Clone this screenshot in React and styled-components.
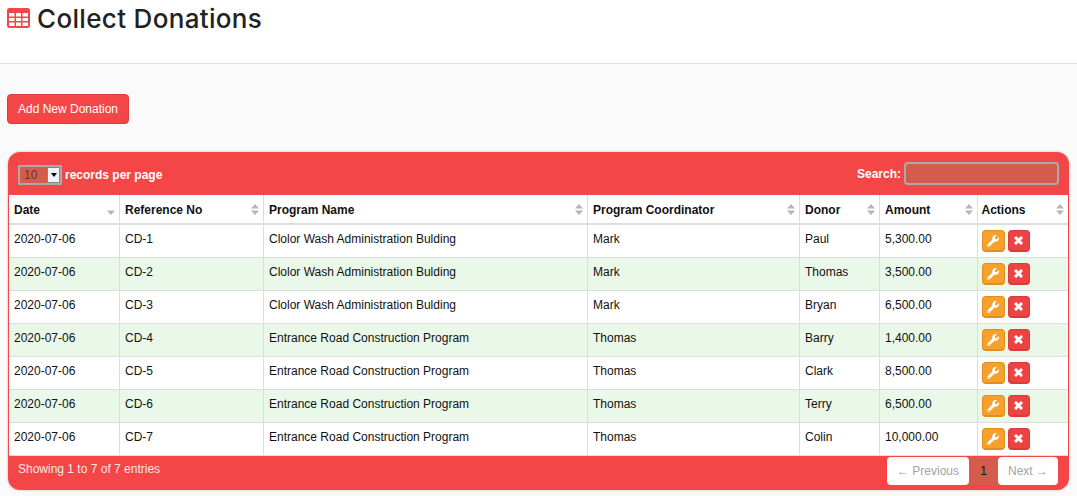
import React from "react";
import styled, { createGlobalStyle } from "styled-components";
import { FaWrench } from "react-icons/fa";

const Global = createGlobalStyle`
  html, body { margin: 0; padding: 0; background: #fafafa; }
  body { font-family: "Liberation Sans", Arial, sans-serif; font-size: 12px; color: #111; }
  * { box-sizing: border-box; }
`;

const Page = styled.div`
  width: 1077px;
  height: 496px;
  overflow: hidden;
`;
const Header = styled.header`
  height: 64px;
  background: #fff;
  border-bottom: 1px solid #dedede;
  padding: 2px 7px 0;
  display: flex;
  align-items: flex-start;
  gap: 7px;
`;
const TitleIcon = styled.svg`
  width: 23px;
  height: 20px;
  margin-top: 6px;
  fill: #f44646;
`;
const Title = styled.h1`
  margin: 0;
  font-family: "Inter", "Noto Sans", sans-serif;
  font-size: 26px;
  line-height: 34px;
  font-weight: 500;
  letter-spacing: 0.33px;
  color: #222;
`;
const Content = styled.main`
  padding: 30px 8px 0 7px;
`;
const AddButton = styled.button`
  display: block;
  width: 122px;
  height: 30px;
  background: #f44646;
  color: #fff;
  border: 1px solid #d83c3c;
  border-radius: 4px;
  font: 12px "Liberation Sans", Arial, sans-serif;
  padding: 0;
`;
const Card = styled.section`
  margin: 28px 0 0 1px;
  width: 1061px;
  background: #f44646;
  border-radius: 12px;
  box-shadow: 0 0 2px 1px #ddd;
  overflow: hidden;
`;
const Toolbar = styled.div`
  height: 43px;
  padding: 10px 10px 0 10px;
  display: flex;
  justify-content: space-between;
  align-items: flex-start;
  color: #fff;
  font-weight: 700;
`;
const Length = styled.label`
  display: flex;
  align-items: center;
  gap: 3px;
  height: 26px;
`;
const Select = styled.div`
  width: 44px;
  height: 20px;
  border: 2px solid #aaa;
  background: #d55b4c;
  display: flex;
  justify-content: space-between;
  align-items: stretch;
  color: #6e332c;
  font-weight: 400;
  padding-left: 4px;
  line-height: 16px;
`;
const Arrow = styled.span`
  width: 13px;
  background: #f2f2f2;
  border: 1px solid #888;
  display: flex;
  align-items: center;
  justify-content: center;
  &::after {
    content: "";
    border-left: 3.5px solid transparent;
    border-right: 3.5px solid transparent;
    border-top: 4px solid #000;
  }
`;
const SearchBox = styled.label`
  display: flex;
  align-items: center;
  gap: 3px;
  height: 23px;
`;
const SearchInput = styled.input`
  width: 155px;
  height: 23px;
  background: #d55b4c;
  border: 2px solid #aaa;
  border-radius: 4px;
  padding: 0;
`;
const TableWrap = styled.div`
  margin: 0 1px;
  background: #fff;
`;
const Table = styled.table`
  width: 1059px;
  table-layout: fixed;
  border-collapse: collapse;
  background: #fff;
`;
const Th = styled.th`
  position: relative;
  height: 29px;
  padding: 2px 5px 0 5.5px;
  text-align: left;
  font-size: 12px;
  font-weight: 700;
  color: #111;
  border-left: 1px solid #ddd;
  border-right: 1px solid #ddd;
  border-bottom: 2px solid #ddd;
  &:first-child { border-left: 0; padding-left: 5px; }
  &:last-child { border-right: 0; padding-left: 4px; }
`;
const Td = styled.td`
  height: 33px;
  padding: 0 5px 4px 5.5px;
  font-size: 12px;
  color: #111;
  border: 1px solid #ddd;
  &:first-child { border-left: 0; padding-left: 5px; }
  &:last-child { border-right: 0; padding: 1px 4px 0; }
`;
const Row = styled.tr`
  background: ${(p) => (p.$alt ? "#e9f8e9" : "#fff")};
`;
const Sort = styled.svg`
  position: absolute;
  right: 4px;
  top: 9px;
  width: 8px;
  height: 11px;
  fill: #b5b5b5;
`;
const Actions = styled.div`
  display: flex;
  gap: 3px;
`;
const ActionButton = styled.button`
  width: ${(p) => p.$w}px;
  height: 22px;
  padding: 0;
  border-radius: 4px;
  border: 1px solid ${(p) => p.$edge};
  border-bottom-width: 2px;
  background: ${(p) => p.$bg};
  color: #fff;
  display: flex;
  align-items: center;
  justify-content: center;
`;
const CloseIcon = styled.svg`
  width: 9px;
  height: 9px;
  stroke: #fff;
  stroke-width: 3;
  fill: none;
`;
const Footer = styled.div`
  height: 34px;
  padding: 6px 11px 0 10px;
  display: flex;
  justify-content: space-between;
  align-items: flex-start;
  color: #fde6e6;
`;
const Info = styled.div`
  line-height: 14px;
`;
const Pager = styled.div`
  display: flex;
  height: 28px;
  margin-top: -5px;
`;
const PageLink = styled.span`
  display: flex;
  align-items: center;
  justify-content: center;
  width: ${(p) => p.$w}px;
  background: #fff;
  color: #a3a3a3;
  border-radius: 4px;
`;
const Current = styled.span`
  display: flex;
  align-items: center;
  justify-content: center;
  width: 29px;
  background: #d55b4c;
  color: #111;
`;

const SortIcon = ({ desc }) => (
  <Sort viewBox="0 0 8 11">
    {!desc && <path d="M4 0 8 4.5H0z" />}
    <path d="M0 6.5h8L4 11z" />
  </Sort>
);

const columns = [
  ["Date", 110],
  ["Reference No", 144],
  ["Program Name", 324],
  ["Program Coordinator", 212],
  ["Donor", 80],
  ["Amount", 98],
  ["Actions", 91],
];
const CW = "Clolor Wash Administration Bulding";
const ER = "Entrance Road Construction Program";
const rows = [
  ["CD-1", CW, "Mark", "Paul", "5,300.00"],
  ["CD-2", CW, "Mark", "Thomas", "3,500.00"],
  ["CD-3", CW, "Mark", "Bryan", "6,500.00"],
  ["CD-4", ER, "Thomas", "Barry", "1,400.00"],
  ["CD-5", ER, "Thomas", "Clark", "8,500.00"],
  ["CD-6", ER, "Thomas", "Terry", "6,500.00"],
  ["CD-7", ER, "Thomas", "Colin", "10,000.00"],
];

export default function App() {
  return (
    <Page>
      <Global />
      <Header>
        <TitleIcon viewBox="0 0 23 20">
          <path fillRule="evenodd" d="M2.500 0h18A2.500 2.500 0 0 1 23 2.500v15a2.500 2.500 0 0 1-2.500 2.500h-18A2.500 2.500 0 0 1 0 17.500v-15A2.500 2.500 0 0 1 2.500 0zM2 5v3.500h5.500V5zm7 0v3.500h5V5zm6.500 0v3.500H21V5zM2 10v3h5.500v-3zm7 0v3h5v-3zm6.500 0v3H21v-3zM2 14.500V18h5.500v-3.500zm7 0V18h5v-3.500zm6.500 0V18H21v-3.500z" />
        </TitleIcon>
        <Title>Collect Donations</Title>
      </Header>
      <Content>
        <AddButton>Add New Donation</AddButton>
        <Card>
          <Toolbar>
            <Length>
              <Select>10<Arrow /></Select>
              records per page
            </Length>
            <SearchBox>
              Search:
              <SearchInput />
            </SearchBox>
          </Toolbar>
          <TableWrap>
            <Table>
              <colgroup>
                {columns.map(([n, w]) => <col key={n} width={w} />)}
              </colgroup>
              <thead>
                <tr>
                  {columns.map(([n], i) => (
                    <Th key={n}>{n}<SortIcon desc={i === 0} /></Th>
                  ))}
                </tr>
              </thead>
              <tbody>
                {rows.map((r, i) => (
                  <Row key={r[0]} $alt={i % 2 === 1}>
                    <Td>2020-07-06</Td>
                    {r.map((c, j) => <Td key={j}>{c}</Td>)}
                    <Td>
                      <Actions>
                        <ActionButton $w={23} $bg="#f7a02c" $edge="#e08e1f"><FaWrench size={12} /></ActionButton>
                        <ActionButton $w={22} $bg="#ee4343" $edge="#d93a3a">
                          <CloseIcon viewBox="0 0 9 9"><path d="M1 1l7 7M8 1 1 8" /></CloseIcon>
                        </ActionButton>
                      </Actions>
                    </Td>
                  </Row>
                ))}
              </tbody>
            </Table>
          </TableWrap>
          <Footer>
            <Info>Showing 1 to 7 of 7 entries</Info>
            <Pager>
              <PageLink $w={82}>← Previous</PageLink>
              <Current>1</Current>
              <PageLink $w={60}>Next →</PageLink>
            </Pager>
          </Footer>
        </Card>
      </Content>
    </Page>
  );
}
